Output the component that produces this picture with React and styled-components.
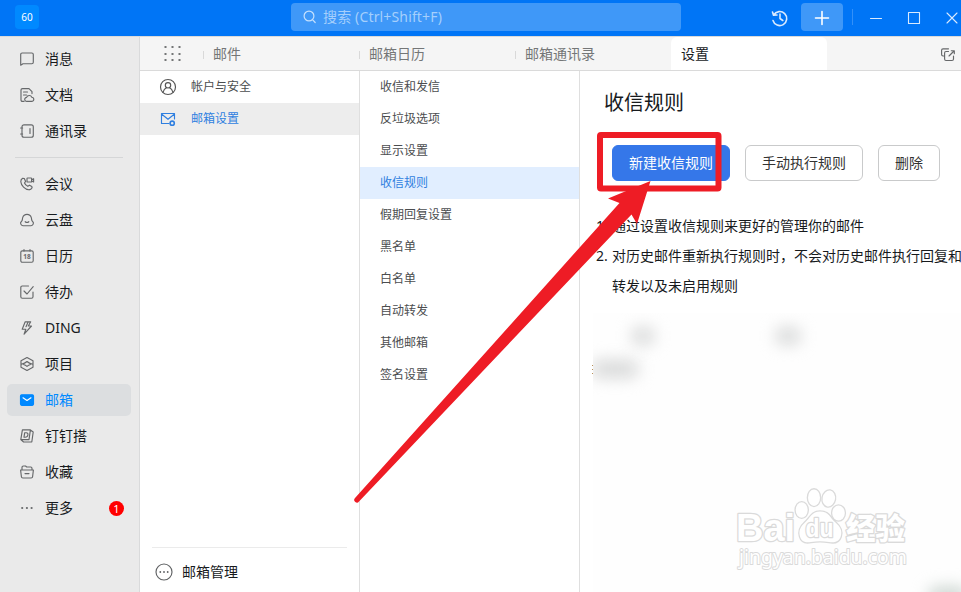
import React from 'react';
import styled, { createGlobalStyle } from 'styled-components';

const GlobalStyle = createGlobalStyle`
  * { box-sizing: border-box; }
  html, body { margin: 0; padding: 0; overflow: hidden; }
  body { font-family: "Noto Sans", "Noto Sans CJK SC", sans-serif; font-size: 14px; color: #171a1d; }
  svg { display: block; flex: none; overflow: visible; }
`;

const Window = styled.div`
  position: relative;
  width: 961px;
  height: 592px;
  display: flex;
  flex-direction: column;
  overflow: hidden;
  background: #fff;
`;

const TitleBar = styled.header`
  height: 36px;
  flex: none;
  display: flex;
  align-items: center;
  background: #0075f6;
  color: #fff;
`;
const Avatar = styled.div`
  width: 24px;
  height: 24px;
  margin: -2px 0 0 15px;
  border-radius: 4px;
  background: #0089ff;
  font: 10px/24px "Noto Sans", sans-serif;
  text-align: center;
`;
const SearchBox = styled.div`
  width: 390px;
  height: 28px;
  margin: -2px 0 0 252px;
  padding-left: 12px;
  display: flex;
  align-items: center;
  gap: 6px;
  border-radius: 4px;
  background: #3f98f8;
  color: #a5cffc;
  font-size: 14px;
  line-height: 28px;
  white-space: nowrap;
`;
const SearchHint = styled.span`
  letter-spacing: 0.15px;
`;
const HistoryButton = styled.div`
  margin-left: 90px;
`;
const AddButton = styled.div`
  width: 42px;
  height: 28px;
  margin: -2px 0 0 12px;
  padding-top: 1px;
  display: grid;
  place-items: center;
  border-radius: 4px;
  background: #3f98f8;
`;
const BarDivider = styled.div`
  width: 1px;
  height: 16px;
  margin: -2px 17px 0 9px;
  background: #3390f8;
`;
const WindowControls = styled.div`
  display: flex;
  align-items: center;
  gap: 26px;
`;

const Body = styled.div`
  flex: 1;
  display: flex;
  min-height: 0;
  border-top: 1px solid #d9dadb;
`;
const Sidebar = styled.nav`
  width: 140px;
  flex: none;
  padding: 6px 8px 0 7px;
  border-right: 1px solid #d9dadb;
  background: #eaeaea;
`;
const SideItem = styled.div`
  height: 32px;
  margin-bottom: 4px;
  padding: 0 7px 0 13px;
  display: flex;
  align-items: center;
  border-radius: 5px;
  background: ${p => (p.$active ? '#dcdee0' : 'transparent')};
  color: ${p => (p.$active ? '#0089ff' : '#171a1d')};
  line-height: 32px;
`;
const SideLabel = styled.span`
  margin-left: 11px;
  flex: 1;
  white-space: nowrap;
`;
const Badge = styled.span`
  width: 15px;
  height: 15px;
  border-radius: 50%;
  background: #ff0000;
  color: #fff;
  font: 11px/15px "Noto Sans", sans-serif;
  text-align: center;
`;
const SideDivider = styled.div`
  height: 1px;
  margin: 10px 8px 10px;
  background: #d5d6d7;
`;

const Workspace = styled.div`
  flex: 1;
  min-width: 0;
  display: flex;
  flex-direction: column;
`;
const TabBar = styled.div`
  height: 34px;
  flex: none;
  display: flex;
  align-items: stretch;
  border-bottom: 1px solid #dadada;
  background: #f5f5f5;
`;
const AppGrid = styled.div`
  width: 63px;
  padding: 9px 0 0 24px;
`;
const Tab = styled.div`
  width: 156px;
  padding-left: ${p => (p.$active ? '10px' : '0')};
  display: flex;
  align-items: center;
  line-height: 32px;
  border-radius: 6px 6px 0 0;
  background: ${p => (p.$active ? '#fff' : 'transparent')};
  color: ${p => (p.$active ? '#171a1d' : '#747677')};
  &::before {
    content: "";
    display: ${p => (p.$active ? 'none' : 'block')};
    width: 1px;
    height: 8px;
    margin: 2px 9px 0 0;
    background: #d9d9d9;
  }
`;
const PopOut = styled.div`
  margin: 11px 0 0 114px;
`;

const Columns = styled.div`
  flex: 1;
  min-height: 0;
  display: flex;
`;
const Column = styled.div`
  width: 220px;
  flex: none;
  display: flex;
  flex-direction: column;
  border-right: 1px solid #dfdfdf;
`;
const MenuRow = styled.div`
  height: 32px;
  padding-left: 20px;
  display: flex;
  align-items: center;
  gap: 15px;
  font-size: 12px;
  line-height: ${p => (p.$compact ? '31px' : '32px')};
  padding-bottom: ${p => (p.$compact ? '1px' : '0')};
  background: ${p => p.$fill || 'transparent'};
  color: ${p => (p.$fill ? '#2f7fe0' : '#4b4d4f')};
`;
const ManageRow = styled.div`
  height: 45px;
  margin: auto 12px 0;
  padding: 4px 0 0 3px;
  display: flex;
  align-items: center;
  gap: 9px;
  line-height: 32px;
  border-top: 1px solid #ebebeb;
`;

const Content = styled.main`
  flex: 1;
  min-width: 0;
  overflow: hidden;
  background: #fff;
`;
const Title = styled.h1`
  margin: 16px 0 0 24px;
  font-size: 20px;
  font-weight: 400;
  line-height: 32px;
`;
const Actions = styled.div`
  margin: 26px 0 0 32px;
  display: flex;
  gap: 15px;
`;
const Button = styled.button`
  height: 36px;
  padding: 0 16px;
  border: 1px solid ${p => (p.$primary ? '#3577e9' : '#c9cacb')};
  border-radius: 6px;
  background: ${p => (p.$primary ? '#3577e9' : '#fff')};
  color: ${p => (p.$primary ? '#fff' : '#333')};
  font: inherit;
  line-height: 32px;
  white-space: nowrap;
`;
const Notes = styled.ol`
  margin: 30px 0 0;
  padding: 0 0 0 16px;
  list-style: none;
  line-height: 30px;
`;
const Note = styled.li`
  display: flex;
  white-space: pre;
`;
const NoteNumber = styled.span`
  width: 16px;
  flex: none;
`;

const Smudge = styled.div`
  position: absolute;
  left: ${p => p.$x}px;
  top: ${p => p.$y}px;
  width: ${p => p.$w}px;
  height: ${p => p.$h}px;
  background: ${p => p.$color || '#d8d9d9'};
  border-radius: 12px;
  filter: blur(8px);
`;
const SmudgeArea = styled.div`
  position: absolute;
  left: 593px;
  top: 313px;
  width: 368px;
  height: 279px;
  overflow: hidden;
  background: #fefefe;
`;
const CutText = styled.div`
  position: absolute;
  left: 592px;
  top: 365px;
  width: 1px;
  height: 9px;
  background: repeating-linear-gradient(#b89058 0 1px, transparent 1px 4px);
`;
const Overlay = styled.svg`
  position: absolute;
  inset: 0;
  pointer-events: none;
`;

const Icon = ({ size = 14, children, color = '#66686a', sw = 1.15 }) => (
  <svg width={size} height={size} viewBox={`0 0 ${size} ${size}`} fill="none"
    stroke={color} strokeWidth={sw} strokeLinecap="round" strokeLinejoin="round">{children}</svg>
);

const icons = {
  message: <Icon><path d="M.7 13.2V2.5Q.7 1 2.2 1h9.6q1.5 0 1.5 1.5v7.7q0 1.5-1.5 1.5H3z" /></Icon>,
  doc: <Icon><path d="M4 13.4H2.5Q1 13.4 1 12V2Q1 .6 2.5.6H9l3 3v2M3.5 4h4M3.5 7h3M6.8 13.4a2 2 0 0 1-.2-4 2.8 2.8 0 0 1 5.2-.2 2.1 2.1 0 0 1-.2 4.2z" /></Icon>,
  contacts: <Icon><rect x="2" y=".8" width="11.3" height="12.4" rx="2" /><path d="M10 4.5v5M.6 4h2M.6 10h2" /></Icon>,
  meeting: <Icon><path d="M4.3 1.5 2.7 1.3Q.7 2.4.8 4.7c.4 4 4.2 7.8 8.1 8.1q2.2 0 3.2-2l-.3-1.3-2.3-1.3-1.7 1.1Q5.500 8.300 4.500 6L5.600 4.400z" /><rect x="7" y="1" width="4.6" height="4" rx=".6" /><path d="m11.6 2.700 2-1v3.200l-2-1" /></Icon>,
  cloud: <Icon><path d="M3 12.700a2.500 2.500 0 0 1-1.400-4.500C2.700 7.300 2.200 6 2.700 4.600a4.500 4.500 0 0 1 8.600 0c.5 1.400 0 2.700 1.100 3.600a2.500 2.500 0 0 1-1.400 4.500zM5.200 8.700q1.800 1.500 3.600 0" /></Icon>,
  calendar: <Icon><rect x=".8" y="1.800" width="12.400" height="11.400" rx="1.500" /><path d="M4 .6v1.500M10 .6v1.500" /><text x="7" y="10" fill="#66686a" stroke="none" fontFamily="Noto Sans" fontWeight="700" fontSize="6.500" textAnchor="middle">18</text></Icon>,
  todo: <Icon><path d="M8.500 1H2.300Q.8 1 .8 2.500v9.200q0 1.500 1.500 1.500h9.200q1.500 0 1.500-1.500V7M4 6l3 3 6.200-7.300" /></Icon>,
  ding: <Icon><path d="M5.200.8h5.500L8.300 5h3.200l-7.400 8.200 1.700-5H2.200zM8 1.200l-2 4.500" /></Icon>,
  project: <Icon><path d="m7 .5 6 3.200v6.600L7 13.500l-6-3.200V3.700zM1.300 7.200Q5 6.500 7 4.500q2 2 5.700 2.700M3.500 7.500Q5.500 8 7 9.400 8.500 8 10.500 7.500" /></Icon>,
  mail: <Icon><rect x=".5" y="1.700" width="13" height="10.600" rx="1.200" fill="#0089ff" stroke="#0089ff" /><path d="m3 4.800 4 2.700 4-2.700" stroke="#fff" /></Icon>,
  dapp: <Icon><path d="M2.400.8h8L9 10.600H.8zM10.400 1l2.800 2-1.400 10H3.600L1 10.800" /><path d="M4.700 3.700h1.600q2 .1 1.600 2.300Q7.500 8.300 5 8.200H4z" /></Icon>,
  favorite: <Icon><path d="M2 5V2.500Q2 1 3.500 1h2l1.200 1h4Q12 2 12 3.500V5M.6 5h12.800l-.8 6.700q-.1 1.300-1.500 1.300H2.900q-1.400 0-1.500-1.300zM5 8.600h4" /></Icon>,
  more: <Icon><g fill="#66686a" stroke="none"><circle cx="2.200" cy="7" r="1.100" /><circle cx="6.900" cy="7" r="1.100" /><circle cx="11.600" cy="7" r="1.100" /></g></Icon>,
};

const primaryNav = [['message', '消息'], ['doc', '文档'], ['contacts', '通讯录']];
const secondaryNav = [
  ['meeting', '会议'], ['cloud', '云盘'], ['calendar', '日历'], ['todo', '待办'], ['ding', 'DING'],
  ['project', '项目'], ['mail', '邮箱'], ['dapp', '钉钉搭'], ['favorite', '收藏'], ['more', '更多', '1'],
];
const settings = ['收信和发信', '反垃圾选项', '显示设置', '收信规则', '假期回复设置', '黑名单', '白名单', '自动转发', '其他邮箱', '签名设置'];

const NavItem = ({ item: [icon, label, count] }) => (
  <SideItem $active={icon === 'mail'}>
    {icons[icon]}
    <SideLabel>{label}</SideLabel>
    {count && <Badge>{count}</Badge>}
  </SideItem>
);

const Watermark = () => (
  <g fill="#fff" stroke="#dadada" strokeWidth="2.600" paintOrder="stroke" strokeLinejoin="round">
    <text x="736" y="541" fontFamily="Liberation Sans" fontWeight="700" fontSize="38" textLength="59" lengthAdjust="spacingAndGlyphs">Bai</text>
    <g strokeWidth="2.600">
      <ellipse cx="801.700" cy="510" rx="6" ry="7.800" />
      <ellipse cx="814" cy="497.700" rx="6" ry="8.300" />
      <ellipse cx="828.800" cy="498.500" rx="6.200" ry="8" transform="rotate(10 828.800 498.500)" />
      <ellipse cx="838.500" cy="513" rx="6.300" ry="7.500" />
      <path d="M820 511.500C812 511.500 810 518 805 522.500C800 527 798.500 531 800 536.500C801.500 542 806 543 811 542Q820 540.500 829 542C834 543 839 542 840.700 536.500C842.500 531 840.500 527 835.500 522.500C830 518 829 511.500 820 511.500Z" />
    </g>
    <text x="805.500" y="537" fontFamily="Liberation Sans" fontWeight="700" fontSize="25" textLength="28" lengthAdjust="spacingAndGlyphs">du</text>
    <text x="846" y="539" fontFamily="Noto Sans CJK SC" fontWeight="900" fontSize="29.500" textLength="59">经验</text>
    <text x="739" y="564" fontFamily="Noto Sans" fontSize="20" strokeWidth="2" textLength="168" lengthAdjust="spacingAndGlyphs">jingyan.baidu.com</text>
  </g>
);

export default function App() {
  return (
    <Window>
      <GlobalStyle />
      <TitleBar>
        <Avatar>60</Avatar>
        <SearchBox>
          <Icon color="#c5e0fd" sw={1.2}><circle cx="6" cy="6" r="4.900" /><path d="m9.700 9.800 2.500 2.700" /></Icon>
          <SearchHint>搜索 (Ctrl+Shift+F)</SearchHint>
        </SearchBox>
        <HistoryButton>
          <Icon size={18} color="#d9eafe" sw={1.6}><path d="M2.700 6A7 7 0 1 1 2 11.500M1.500 3l1 3.300L6 6M9 5v4.500l2.800 2" /></Icon>
        </HistoryButton>
        <AddButton><Icon color="#fff" sw={1.6}><path d="M7 .5v13M.5 7h13" /></Icon></AddButton>
        <BarDivider />
        <WindowControls>
          <Icon size={12} color="#d9eafe" sw={1.1}><path d="M.5 6.500h11" /></Icon>
          <Icon size={12} color="#d9eafe" sw={1.1}><rect x=".5" y=".5" width="11" height="11" /></Icon>
          <Icon size={12} color="#d9eafe" sw={1.1}><path d="m1 1 10 10M11 1 1 11" /></Icon>
        </WindowControls>
      </TitleBar>
      <Body>
        <Sidebar>
          {primaryNav.map(item => <NavItem key={item[0]} item={item} />)}
          <SideDivider />
          {secondaryNav.map(item => <NavItem key={item[0]} item={item} />)}
        </Sidebar>
        <Workspace>
          <TabBar>
            <AppGrid>
              <Icon size={16}>
                <g fill="#747677" stroke="none">
                  {[0, 7, 13].map(y => [0, 7, 14].map(x => <rect key={`${x}-${y}`} x={x + 0.5} y={y} width="2" height="2" />))}
                </g>
              </Icon>
            </AppGrid>
            <Tab>邮件</Tab>
            <Tab>邮箱日历</Tab>
            <Tab>邮箱通讯录</Tab>
            <Tab $active>设置</Tab>
            <PopOut>
              <Icon><path d="M3 8H2Q.6 8 .6 6.600V2.200Q.6.800 2 .800h5.500M7.500 3.500H5Q3.600 3.500 3.600 5v6q0 1.500 1.400 1.500h6q1.500 0 1.500-1.500V8M8 8l5-5M10.300 2.700h3v3" /></Icon>
            </PopOut>
          </TabBar>
          <Columns>
            <Column>
              <MenuRow>
                <Icon size={16} color="#555"><circle cx="8" cy="8" r="7.500" /><circle cx="8" cy="6.300" r="2.700" /><path d="M3 13.300q1-3.500 3.500-4.500M13 13.300q-1-3.500-3.500-4.500" /></Icon>
                帐户与安全
              </MenuRow>
              <MenuRow $fill="#ededed">
                <Icon size={16} color="#2f7fe0"><path d="M9 12.500H1.500v-10h13V8M1.500 3 8 8.300 14.500 3" /><circle cx="12.200" cy="12.200" r="2.100" strokeWidth="1.600" /></Icon>
                邮箱设置
              </MenuRow>
              <ManageRow>
                <Icon size={18} color="#606264"><circle cx="9" cy="9" r="8" /><g fill="#606264" stroke="none"><circle cx="5.300" cy="9" r=".9" /><circle cx="9" cy="9" r=".9" /><circle cx="12.700" cy="9" r=".9" /></g></Icon>
                邮箱管理
              </ManageRow>
            </Column>
            <Column>
              {settings.map(label => <MenuRow $compact key={label} $fill={label === '收信规则' ? '#e1eeff' : undefined}>{label}</MenuRow>)}
            </Column>
            <Content>
              <Title>收信规则</Title>
              <Actions>
                <Button $primary>新建收信规则</Button>
                <Button>手动执行规则</Button>
                <Button>删除</Button>
              </Actions>
              <Notes>
                <Note><NoteNumber>1.</NoteNumber>通过设置收信规则来更好的管理你的邮件</Note>
                <Note><NoteNumber>2.</NoteNumber>{'对历史邮件重新执行规则时，不会对历史邮件执行回复和\n转发以及未启用规则'}</Note>
              </Notes>
            </Content>
          </Columns>
        </Workspace>
      </Body>
      <SmudgeArea>
        <Smudge $x={38} $y={14} $w={24} $h={18} />
        <Smudge $x={182} $y={14} $w={26} $h={18} />
        <Smudge $x={-2} $y={47} $w={48} $h={18} />
        <Smudge $x={335} $y={274} $w={40} $h={18} $color="#ccd5d0" />
      </SmudgeArea>
      <CutText />
      <Overlay width="961" height="592" viewBox="0 0 961 592">
        <Watermark />
        <rect x="600" y="135" width="118.500" height="53.500" rx="1" fill="none" stroke="#ee1c25" strokeWidth="6" />
        <path d="M650.500 181 608 198.500 619.500 203 354.800 498.300A2.600 2.600 0 0 0 359 501.500L631.500 214.500 637 224Z" fill="#ee1c25" />
      </Overlay>
    </Window>
  );
}
